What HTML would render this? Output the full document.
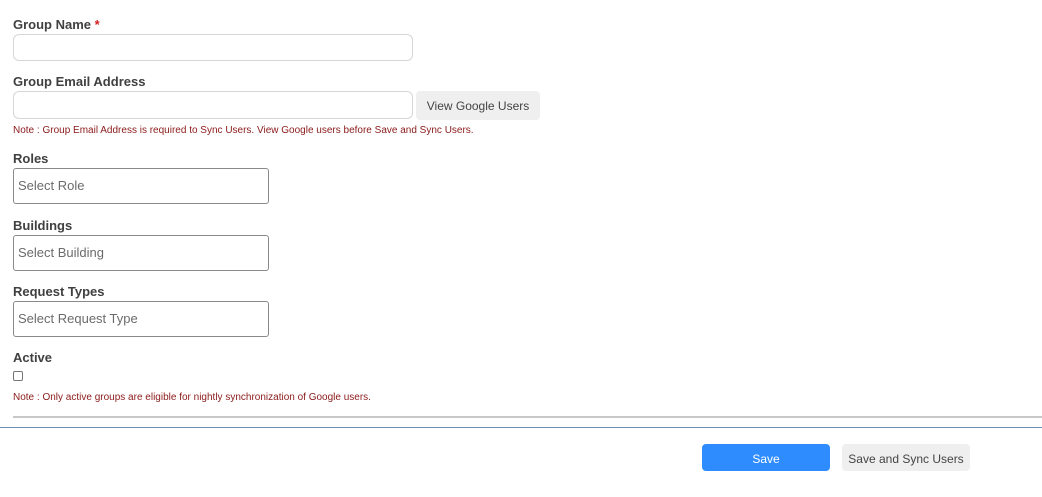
<!DOCTYPE html>
<html><head><style>
body{margin:0;width:1042px;height:497px;background:#fff;font-family:"Liberation Sans",sans-serif;position:relative;overflow:hidden}
.a{position:absolute}
.lbl{font-size:13px;font-weight:bold;color:#404040;left:13px}
.inp{left:13px;width:398px;border:1px solid #d6d6d6;border-radius:6px;background:#fff}
.sel{left:13px;border:1px solid #8a8a8a;border-radius:3px;font-size:13px;color:#6b6b6b;line-height:34px;padding-left:4px;box-sizing:border-box;width:256px;height:36px}
.note{left:13px;font-size:10px;color:#8b1a1a}
.btn{border-radius:4px;font-size:12px;text-align:center}
</style></head><body>
<div class="a lbl" style="top:17px">Group Name <span style="color:#d42020">*</span></div>
<div class="a inp" style="top:34px;height:25px"></div>
<div class="a lbl" style="top:74px">Group Email Address</div>
<div class="a inp" style="top:91px;height:26px"></div>
<div class="a btn" style="left:416px;top:91px;width:124px;height:29px;line-height:30px;background:#efefef;color:#444">View Google Users</div>
<div class="a note" style="top:125px">Note : Group Email Address is required to Sync Users. View Google users before Save and Sync Users.</div>
<div class="a lbl" style="top:151px">Roles</div>
<div class="a sel" style="top:168px">Select Role</div>
<div class="a lbl" style="top:218px">Buildings</div>
<div class="a sel" style="top:235px">Select Building</div>
<div class="a lbl" style="top:284px">Request Types</div>
<div class="a sel" style="top:301px">Select Request Type</div>
<div class="a lbl" style="top:350px">Active</div>
<div class="a" style="left:13px;top:371px;width:8px;height:8px;border:1px solid #777;border-radius:2px"></div>
<div class="a note" style="top:392px">Note : Only active groups are eligible for nightly synchronization of Google users.</div>
<div class="a" style="left:13px;top:416px;width:1029px;height:2px;background:#c8c8c8"></div>
<div class="a" style="left:0;top:427px;width:1042px;height:1px;background:#6e8fb5"></div>
<div class="a btn" style="left:702px;top:444px;width:128px;height:27px;line-height:30px;background:#2e8cff;color:#fff">Save</div>
<div class="a btn" style="left:842px;top:444px;width:128px;height:27px;line-height:30px;background:#efefef;color:#444">Save and Sync Users</div>
</body></html>
